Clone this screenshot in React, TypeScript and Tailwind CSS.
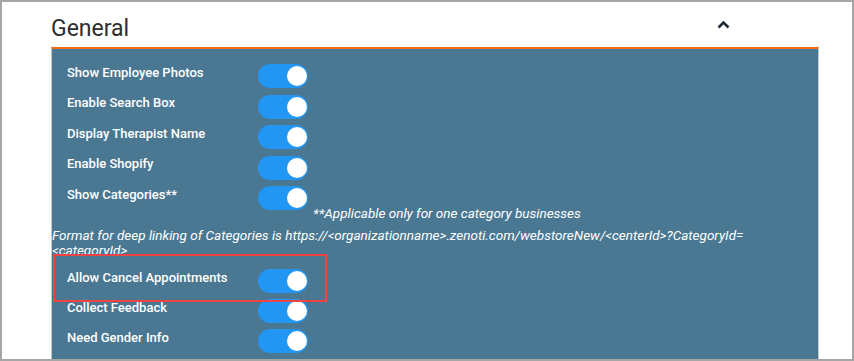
import React from "react";

const Toggle = () => (
  <div className="flex h-[24px] w-[50px] shrink-0 items-center justify-end rounded-full bg-[#2196f3] pr-[1.5px]">
    <div className="h-[20px] w-[20px] rounded-full bg-white" />
  </div>
);

const Row = ({ label, tall = true }: { label: string; tall?: boolean }) => (
  <div className={`flex items-start ${tall ? "h-[30.5px]" : "h-[30px]"}`}>
    <div className="mt-[0.5px] w-[206px] shrink-0 pl-[15px] text-[13px] leading-[16px] font-medium text-white">
      {label}
    </div>
    <Toggle />
  </div>
);

const App = () => {
  const firstRows = [
    "Show Employee Photos",
    "Enable Search Box",
    "Display Therapist Name",
    "Enable Shopify",
  ];

  const secondRows = ["Allow Cancel Appointments", "Collect Feedback", "Need Gender Info"];

  return (
    <div className="relative h-[361px] w-[854px] overflow-hidden border-2 border-[#a6a6a6] bg-white font-['Roboto',sans-serif]">
      <div className="ml-[49px] mr-[33px]">
        {/* Section header */}
        <div className="flex h-[43px] items-start justify-between pt-[13px] pr-[89px]">
          <h2 className="text-[23px] leading-[28px] font-normal text-[#2e2e2e]">General</h2>
          <svg width="13" height="9" viewBox="0 0 13 9" className="mt-[5px]">
            <path d="M1.5 7.5 L6.5 2.5 L11.5 7.5" fill="none" stroke="#1d2a3a" strokeWidth="2.6" />
          </svg>
        </div>

        {/* Panel */}
        <div className="mt-[2px] h-[330px] border-t-2 border-x border-t-[#f26b10] border-x-[#c4c8cc] bg-[#4a7892] pt-[15px]">
          {firstRows.map((r) => (
            <Row key={r} label={r} />
          ))}

          <div className="flex h-[19.5px] items-start">
            <div className="mt-[0.5px] w-[206px] shrink-0 pl-[15px] text-[13px] leading-[16px] font-medium text-white">
              Show Categories**
            </div>
            <Toggle />
          </div>
          <div className="ml-[261px] h-[15px] text-[13.5px] leading-[15px] italic text-white">
            **Applicable only for one category businesses
          </div>
          <div className="mt-[7px] h-[27.5px] overflow-hidden text-[13.5px] leading-[15px] italic text-white">
            Format for deep linking of Categories is https://&lt;organizationname&gt;.zenoti.com/webstoreNew/&lt;centerId&gt;?CategoryId= &lt;categoryId&gt;
          </div>

          <div className="pt-[14px]">
            {secondRows.map((r) => (
              <Row key={r} label={r} tall={false} />
            ))}
            <div className="flex h-[30px] items-start pl-[206px]">
              <Toggle />
            </div>
          </div>
        </div>
      </div>

      {/* Highlight annotation */}
      <div className="absolute left-[51px] top-[252px] h-[48px] w-[274px] border-2 border-[#f04444]" />
    </div>
  );
};

export default App;
